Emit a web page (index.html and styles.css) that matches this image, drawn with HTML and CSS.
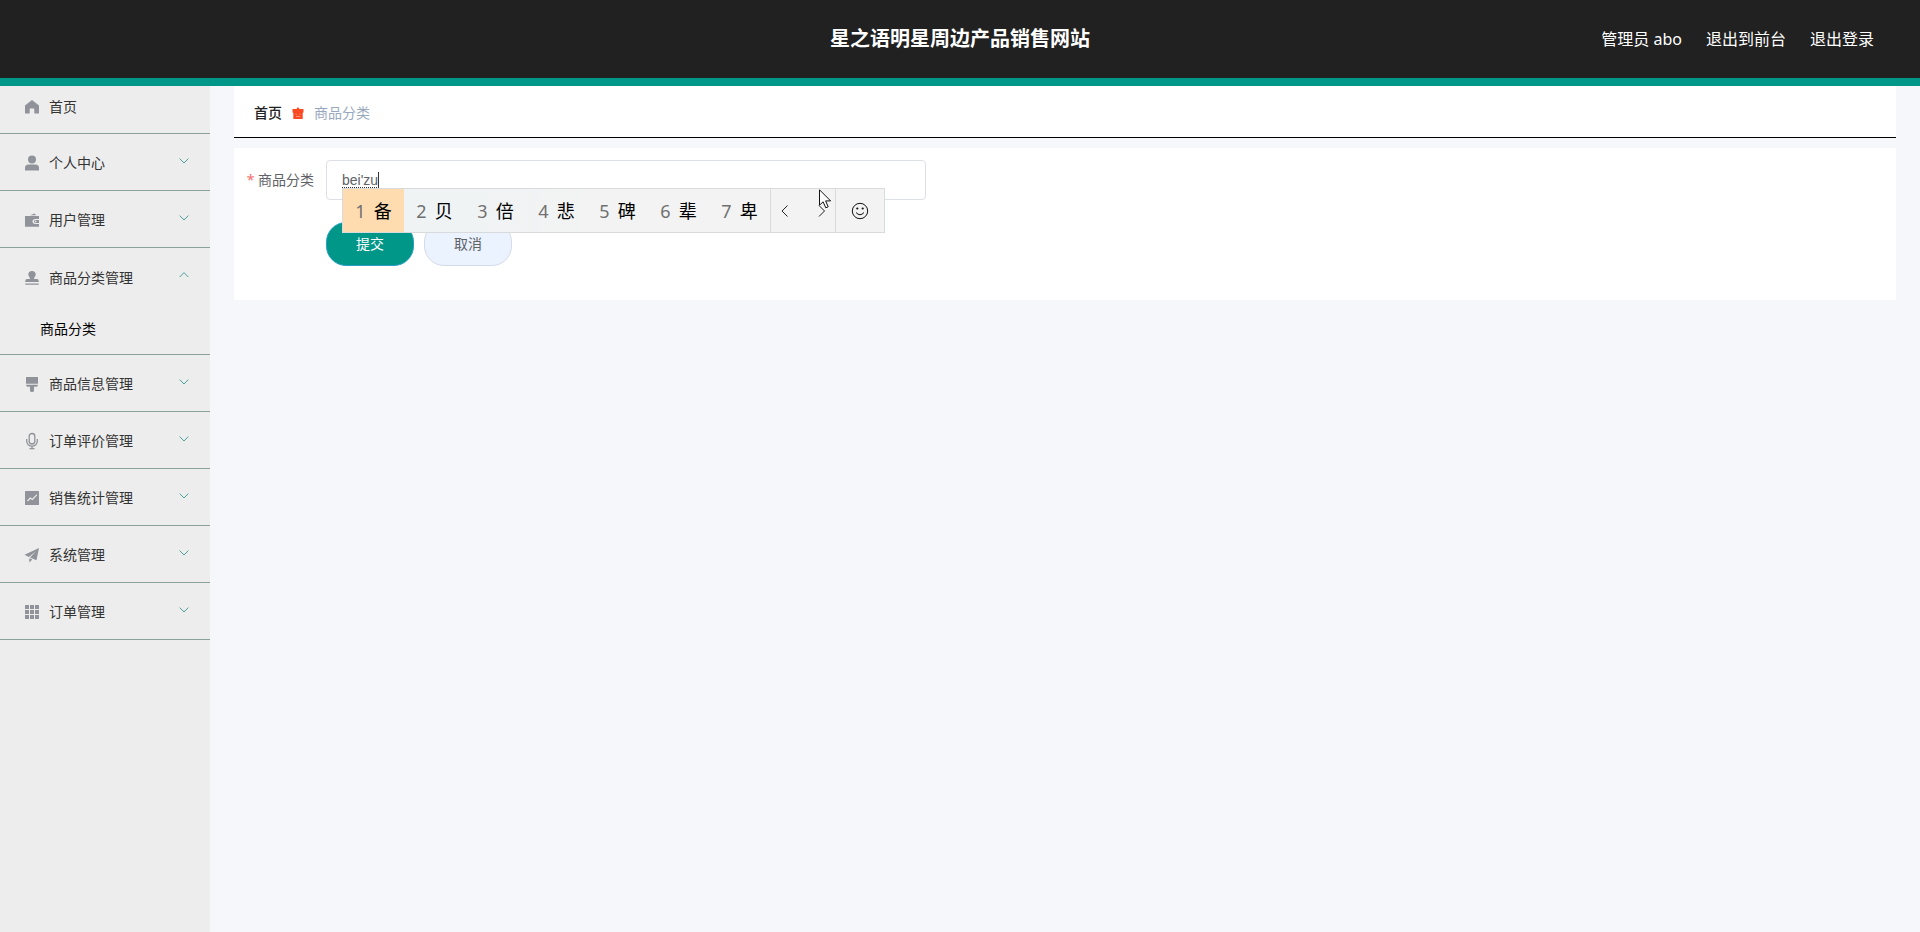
FILE: index.html
```html
<!DOCTYPE html>
<html lang="zh-CN">
<head>
<meta charset="utf-8">
<meta name="viewport" content="width=device-width, initial-scale=1">
<title>星之语明星周边产品销售网站</title>
<link rel="stylesheet" href="styles.css">
</head>
<body>
<svg class="sprite" aria-hidden="true">
  <symbol id="down" viewBox="0 0 10 10"><path d="M.7 2.6 5 7l4.300-4.400" fill="none" stroke="currentColor"/></symbol>
  <symbol id="up" viewBox="0 0 10 10"><path d="M.7 7 5 2.600 9.300 7" fill="none" stroke="currentColor"/></symbol>
</svg>
<header class="header">
  <h1 class="title">星之语明星周边产品销售网站</h1>
  <nav class="account">
    <span>管理员 abo</span>
    <a href="#front">退出到前台</a>
    <a href="#logout">退出登录</a>
  </nav>
</header>
<div class="layout">
  <nav class="sidebar">
    <a class="item item-home" href="#home">
      <svg class="icon" viewBox="0 0 14 14"><path d="M7 0 0 5.600V13.500h4.700V9.200q0-.7.7-.7h3.200q.7 0 .7.700v4.300H14V5.600z"/></svg>
      <span class="name">首页</span>
    </a>
    <button class="item" type="button">
      <svg class="icon" viewBox="0 0 14 14"><circle cx="7" cy="3.500" r="4"/><path d="M0 14.500V12q0-3.500 3.500-3.500h7Q14 8.500 14 12v2.500z"/></svg>
      <span class="name">个人中心</span><svg class="chevron"><use href="#down"/></svg>
    </button>
    <button class="item" type="button">
      <svg class="icon" viewBox="0 0 14 14"><path d="M5 2.300 9.500.500l1.700 1.800zM0 3h14v3h-3.500q-3 .2-3 2.500t3 2.500H14v2.800H0z"/><path d="M10.500 7H14v3h-3.500Q9 9.800 9 8.500T10.500 7z"/><circle cx="10.700" cy="8.500" r=".8" fill="#ededed"/></svg>
      <span class="name">用户管理</span><svg class="chevron"><use href="#down"/></svg>
    </button>
    <div class="group">
      <button class="item item-open" type="button" aria-expanded="true">
        <svg class="icon" viewBox="0 0 14 14"><path d="M7 0a3.700 3.700 0 0 1 3.700 3.700C10.700 5.200 9 6 9 8h3q1.700 0 1.700 1.700V11H.3V9.700Q.3 8 2 8h3c0-2-1.700-2.800-1.700-4.300A3.700 3.700 0 0 1 7 0zM.3 12.400h13.400v1.300H.3z"/></svg>
        <span class="name">商品分类管理</span><svg class="chevron"><use href="#up"/></svg>
      </button>
      <a class="subitem" href="#category">商品分类</a>
    </div>
    <button class="item" type="button">
      <svg class="icon" viewBox="0 0 14 14"><path d="M1 0h12v6.800H1zM1 7.800h12q0 1.900-1.700 1.900H9v4.300q0 1-2 1t-2-1V9.700H2.700Q1 9.700 1 7.800z"/></svg>
      <span class="name">商品信息管理</span><svg class="chevron"><use href="#down"/></svg>
    </button>
    <button class="item" type="button">
      <svg class="icon icon-line" viewBox="0 0 14 14"><rect x="4.200" y="-.5" width="5.600" height="10.500" rx="2.800"/><path d="M1.700 5v2.300a5.300 4.800 0 0 0 10.600 0V5M7 12v2.500M4.500 14.600h5"/></svg>
      <span class="name">订单评价管理</span><svg class="chevron"><use href="#down"/></svg>
    </button>
    <button class="item" type="button">
      <svg class="icon" viewBox="0 0 14 14"><rect width="14" height="14" rx=".5"/><path d="m2.500 10 2.800-3 2 1.500 3.500-3.700" fill="none" stroke="#ededed" stroke-width="1.200"/><circle cx="11.300" cy="4.300" r=".8" fill="#ededed"/></svg>
      <span class="name">销售统计管理</span><svg class="chevron"><use href="#down"/></svg>
    </button>
    <button class="item" type="button">
      <svg class="icon" viewBox="0 0 14 14"><path d="M14 0-.5 6.700 3.800 9 11 3.300 5 9.600l6.500 2.700zM4.300 10.300l3 1.300L4.300 14.500z"/></svg>
      <span class="name">系统管理</span><svg class="chevron"><use href="#down"/></svg>
    </button>
    <button class="item" type="button">
      <svg class="icon" viewBox="0 0 14 14"><path d="M0 0h4v4H0zM5 0h4v4H5zM10 0h4v4h-4zM0 5h4v4H0zM5 5h4v4H5zM10 5h4v4h-4zM0 10h4v4H0zM5 10h4v4H5zM10 10h4v4h-4z"/></svg>
      <span class="name">订单管理</span><svg class="chevron"><use href="#down"/></svg>
    </button>
  </nav>
  <main class="main">
    <nav class="breadcrumb" aria-label="breadcrumb">
      <a class="crumb-home" href="#home">首页</a>
      <svg class="crumb-mark" viewBox="0 0 12 12"><path d="M6 0 7.500 2H11.500v3.200L10.700 6v6H1.300V6L.5 5.200V2H4.500z" fill="#fb4a22"/><path d="M3.500 7.300h1.300M7.300 7.300h1.300M4 9.500h4" stroke="#ff9274"/></svg>
      <span class="crumb-current">商品分类</span>
    </nav>
    <form class="card">
      <label class="label" for="category"><span class="required">*</span> 商品分类</label>
      <div class="field">
        <input class="input" id="category" type="text" value="bei'zu" autocomplete="off" spellcheck="false">
        <i class="composition"></i>
        <div class="ime">
          <ol class="candidates">
            <li class="candidate candidate-active"><span class="num">1</span>备</li>
            <li class="candidate"><span class="num">2</span>贝</li>
            <li class="candidate"><span class="num">3</span>倍</li>
            <li class="candidate"><span class="num">4</span>悲</li>
            <li class="candidate"><span class="num">5</span>碑</li>
            <li class="candidate"><span class="num">6</span>辈</li>
            <li class="candidate"><span class="num">7</span>卑</li>
          </ol>
          <div class="pager">
            <button class="ime-button" type="button" aria-label="上一页"><svg class="arrow" viewBox="0 0 8 14"><path d="M6.500 1.500 1 7l5.500 5.500"/></svg></button>
            <button class="ime-button" type="button" aria-label="下一页"><svg class="arrow" viewBox="0 0 8 14"><path d="M1 1.500 6.500 7 1 12.500"/></svg></button>
          </div>
          <button class="ime-button emoji" type="button" aria-label="表情"><svg class="smile" viewBox="0 0 18 18"><circle cx="9" cy="9" r="7.700"/><path d="M5 10.500q4 4.500 8 0"/><circle class="eye" cx="6.300" cy="6.500" r="1.100"/><circle class="eye" cx="11.700" cy="6.500" r="1.100"/></svg></button>
          <svg class="pointer" viewBox="0 0 13 20"><path d="M.5.800v15.400l3.600-3.400 2.700 6 2.400-1-2.600-5.900h5z"/></svg>
        </div>
      </div>
      <div class="actions">
        <button class="button button-primary" type="submit">提交</button>
        <button class="button" type="button">取消</button>
      </div>
    </form>
  </main>
</div>
</body>
</html>
```
FILE: styles.css
```css
* { box-sizing: border-box; }

body {
  margin: 0;
  min-height: 100vh;
  display: flex;
  flex-direction: column;
  background: #f5f7fb;
  color: #333;
  font: 14px/20px "Noto Sans", "Noto Sans CJK SC", sans-serif;
}

a { color: inherit; text-decoration: none; }
button { margin: 0; border: 0; background: none; color: inherit; font: inherit; }
.sprite { display: none; }

.header {
  display: grid;
  grid-template-columns: 1fr auto 1fr;
  align-items: center;
  height: 86px;
  padding: 0 46px;
  border-bottom: 8px solid #009688;
  background: #212121;
  color: #fff;
}
.title { grid-column: 2; margin: 0; font-size: 20px; line-height: 28px; }
.account { display: flex; justify-content: flex-end; gap: 24px; font-size: 16px; line-height: 24px; }

.layout { flex: 1; display: flex; }

.sidebar { flex: 0 0 210px; background: #ededed; }
.item {
  display: flex;
  align-items: center;
  width: 100%;
  height: 57px;
  padding: 2px 21px 0 25px;
  border-bottom: 1px solid #8aa29c;
  text-align: left;
}
.item-home { height: 48px; padding-top: 0; padding-bottom: 6px; }
.item-open { border-bottom: 0; }
.group { height: 107px; border-bottom: 1px solid #8aa29c; }
.subitem { display: block; padding: 14px 40px; color: #000; }
.icon { flex: none; width: 14px; height: 14px; margin-right: 10px; overflow: visible; fill: #909399; }
.icon-line { fill: none; stroke: #909399; stroke-width: 1.300; }
.name { flex: 1; }
.chevron { width: 10px; height: 10px; margin-bottom: 5px; color: #4ba298; }

.main { flex: 1; min-width: 0; padding: 0 24px; }
.breadcrumb {
  display: flex;
  align-items: center;
  height: 52px;
  margin-bottom: 10px;
  padding: 2px 20px 0;
  border-bottom: 1px solid #000;
  background: #fff;
}
.crumb-home { color: #222; font-weight: 500; }
.crumb-mark { width: 12px; height: 12px; margin: 0 10px; }
.crumb-current { color: #97a8be; }

.card {
  display: grid;
  grid-template-columns: 80px minmax(0, 600px);
  column-gap: 0;
  row-gap: 22px;
  padding: 12px 12px 34px;
  background: #fff;
}
.label { padding-right: 12px; color: #606266; line-height: 40px; text-align: right; white-space: nowrap; }
.required { color: #f56c6c; }
.field { position: relative; }
.input {
  display: block;
  width: 100%;
  height: 40px;
  padding: 0 15px;
  border: 1px solid #dcdfe6;
  border-radius: 4px;
  outline: 0;
  background: #fff;
  color: #606266;
  font: 14px "Liberation Sans", sans-serif;
}
/* Uncommitted pinyin: dotted underline with the text caret at its end */
.composition {
  position: absolute;
  top: 12px;
  left: 16px;
  width: 37px;
  height: 16px;
  border-right: 1px solid #333;
  border-bottom: 1px dotted #333;
  pointer-events: none;
}

.ime {
  position: absolute;
  z-index: 2;
  top: 28px;
  left: 16px;
  display: flex;
  height: 45px;
  border: 1px solid #d9dadb;
  background: #f3f3f3;
  color: #000;
  font-size: 18px;
}
.candidates {
  display: flex;
  margin: 0;
  padding: 0;
  background: linear-gradient(90deg, #edf3f5, #f3f3f3 60%);
  list-style: none;
}
.candidate { display: flex; align-items: center; justify-content: center; gap: 8px; width: 61px; }
.candidate-active { background: #ffdcb0; }
.num { color: #707070; font-size: 18px; }
.pager { display: flex; justify-content: space-between; width: 66px; padding: 0 7px 0 8px; border: solid #d9dadb; border-width: 0 1px; }
.ime-button { display: flex; align-items: center; justify-content: center; padding: 0 2px; }
.emoji { width: 48px; }
.arrow { width: 8px; height: 14px; fill: none; stroke: #222; }
.smile { width: 18px; height: 18px; fill: none; stroke: #111; }
.eye { fill: #111; stroke: none; }
.pointer { position: absolute; top: 0; left: 476px; width: 13px; height: 20px; fill: #fff; stroke: #111; }

.actions { grid-column: 2; display: flex; gap: 10px; }
.button {
  width: 88px;
  height: 44px;
  border: 1px solid #d4dbe6;
  border-radius: 20px;
  background: #eaf3ff;
  color: #606266;
}
.button-primary { border-color: #2a9fc4; background: #009688; color: #fff; }
```
